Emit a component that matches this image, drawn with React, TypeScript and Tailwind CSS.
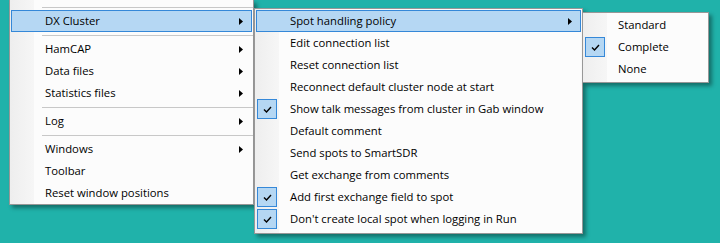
import React from 'react';

type Item =
  | { kind: 'sep' }
  | { kind: 'pad'; h: string }
  | { kind: 'item'; label: string; sub?: boolean; checked?: boolean; hot?: boolean };

const Arrow: React.FC = () => (
  <svg width="4" height="7" viewBox="0 0 4 7" className="block">
    <path d="M0 0 L4 3.5 L0 7 Z" fill="#000" />
  </svg>
);

const Check: React.FC = () => (
  <svg width="9" height="7" viewBox="0 0 9 7" className="block">
    <path d="M1 3.5 L3.5 6 L8 1" fill="none" stroke="#000" strokeWidth="1.4" />
  </svg>
);

const MenuRow: React.FC<{ item: Item }> = ({ item }) => {
  if (item.kind === 'pad') return <div className={item.h} />;
  if (item.kind === 'sep')
    return (
      <div className="h-[6px] flex items-center pl-[32px]">
        <div className="h-px w-full bg-[#c8c8c8]" />
      </div>
    );
  return (
    <div
      className={`mx-px h-[22px] flex items-center border pr-[8px] ${
        item.hot ? 'bg-[#b5d7f3] border-[#3588d8]' : 'border-transparent'
      }`}
    >
      <div className="w-[20px] h-[20px] shrink-0">
        {item.checked && (
          <div className="w-[20px] h-[20px] bg-[#b5d7f3] border border-[#3588d8] flex items-center justify-center">
            <Check />
          </div>
        )}
      </div>
      <span className="ml-[13px] whitespace-nowrap">{item.label}</span>
      {item.sub && (
        <span className="ml-auto">
          <Arrow />
        </span>
      )}
    </div>
  );
};

const leftItems: Item[] = [
  { kind: 'pad', h: 'h-[4px]' },
  { kind: 'sep' },
  { kind: 'item', label: 'DX Cluster', sub: true, hot: true },
  { kind: 'sep' },
  { kind: 'item', label: 'HamCAP', sub: true },
  { kind: 'item', label: 'Data files', sub: true },
  { kind: 'item', label: 'Statistics files', sub: true },
  { kind: 'sep' },
  { kind: 'item', label: 'Log', sub: true },
  { kind: 'sep' },
  { kind: 'item', label: 'Windows', sub: true },
  { kind: 'item', label: 'Toolbar' },
  { kind: 'item', label: 'Reset window positions' },
];

const clusterItems: Item[] = [
  { kind: 'item', label: 'Spot handling policy', sub: true, hot: true },
  { kind: 'item', label: 'Edit connection list' },
  { kind: 'item', label: 'Reset connection list' },
  { kind: 'item', label: 'Reconnect default cluster node at start' },
  { kind: 'item', label: 'Show talk messages from cluster in Gab window', checked: true },
  { kind: 'item', label: 'Default comment' },
  { kind: 'item', label: 'Send spots to SmartSDR' },
  { kind: 'item', label: 'Get exchange from comments' },
  { kind: 'item', label: 'Add first exchange field to spot', checked: true },
  { kind: 'item', label: "Don't create local spot when logging in Run", checked: true },
];

const policyItems: Item[] = [
  { kind: 'item', label: 'Standard' },
  { kind: 'item', label: 'Complete', checked: true },
  { kind: 'item', label: 'None' },
];

const menuBg =
  'bg-[linear-gradient(to_right,#eeeeee_0px,#f6f6f6_24px,#fcfcfc_24px,#fcfcfc_100%)]';
const menuShadow = 'shadow-[3px_3px_4px_rgba(0,0,0,0.38)]';

export default function App() {
  return (
    <div className="relative w-[720px] h-[243px] overflow-hidden bg-[#20b2aa] text-[11.3px] text-black font-['Open_Sans',sans-serif]">
      {/* main menu, opened from above the window */}
      <div className={`absolute left-[9px] top-0 w-[245px] border-x border-b border-[#979797] ${menuBg} ${menuShadow}`}>
        {leftItems.map((it, i) => (
          <MenuRow key={i} item={it} />
        ))}
      </div>

      {/* DX Cluster submenu */}
      <div className={`absolute left-[254px] top-[8px] w-[329px] border border-[#979797] pt-px pb-[3px] ${menuBg} ${menuShadow}`}>
        {clusterItems.map((it, i) => (
          <MenuRow key={i} item={it} />
        ))}
      </div>

      {/* Spot handling policy submenu */}
      <div className={`absolute left-[582px] top-[12px] w-[127px] border border-[#979797] pt-px pb-[2px] ${menuBg} ${menuShadow}`}>
        {policyItems.map((it, i) => (
          <MenuRow key={i} item={it} />
        ))}
      </div>
    </div>
  );
}
